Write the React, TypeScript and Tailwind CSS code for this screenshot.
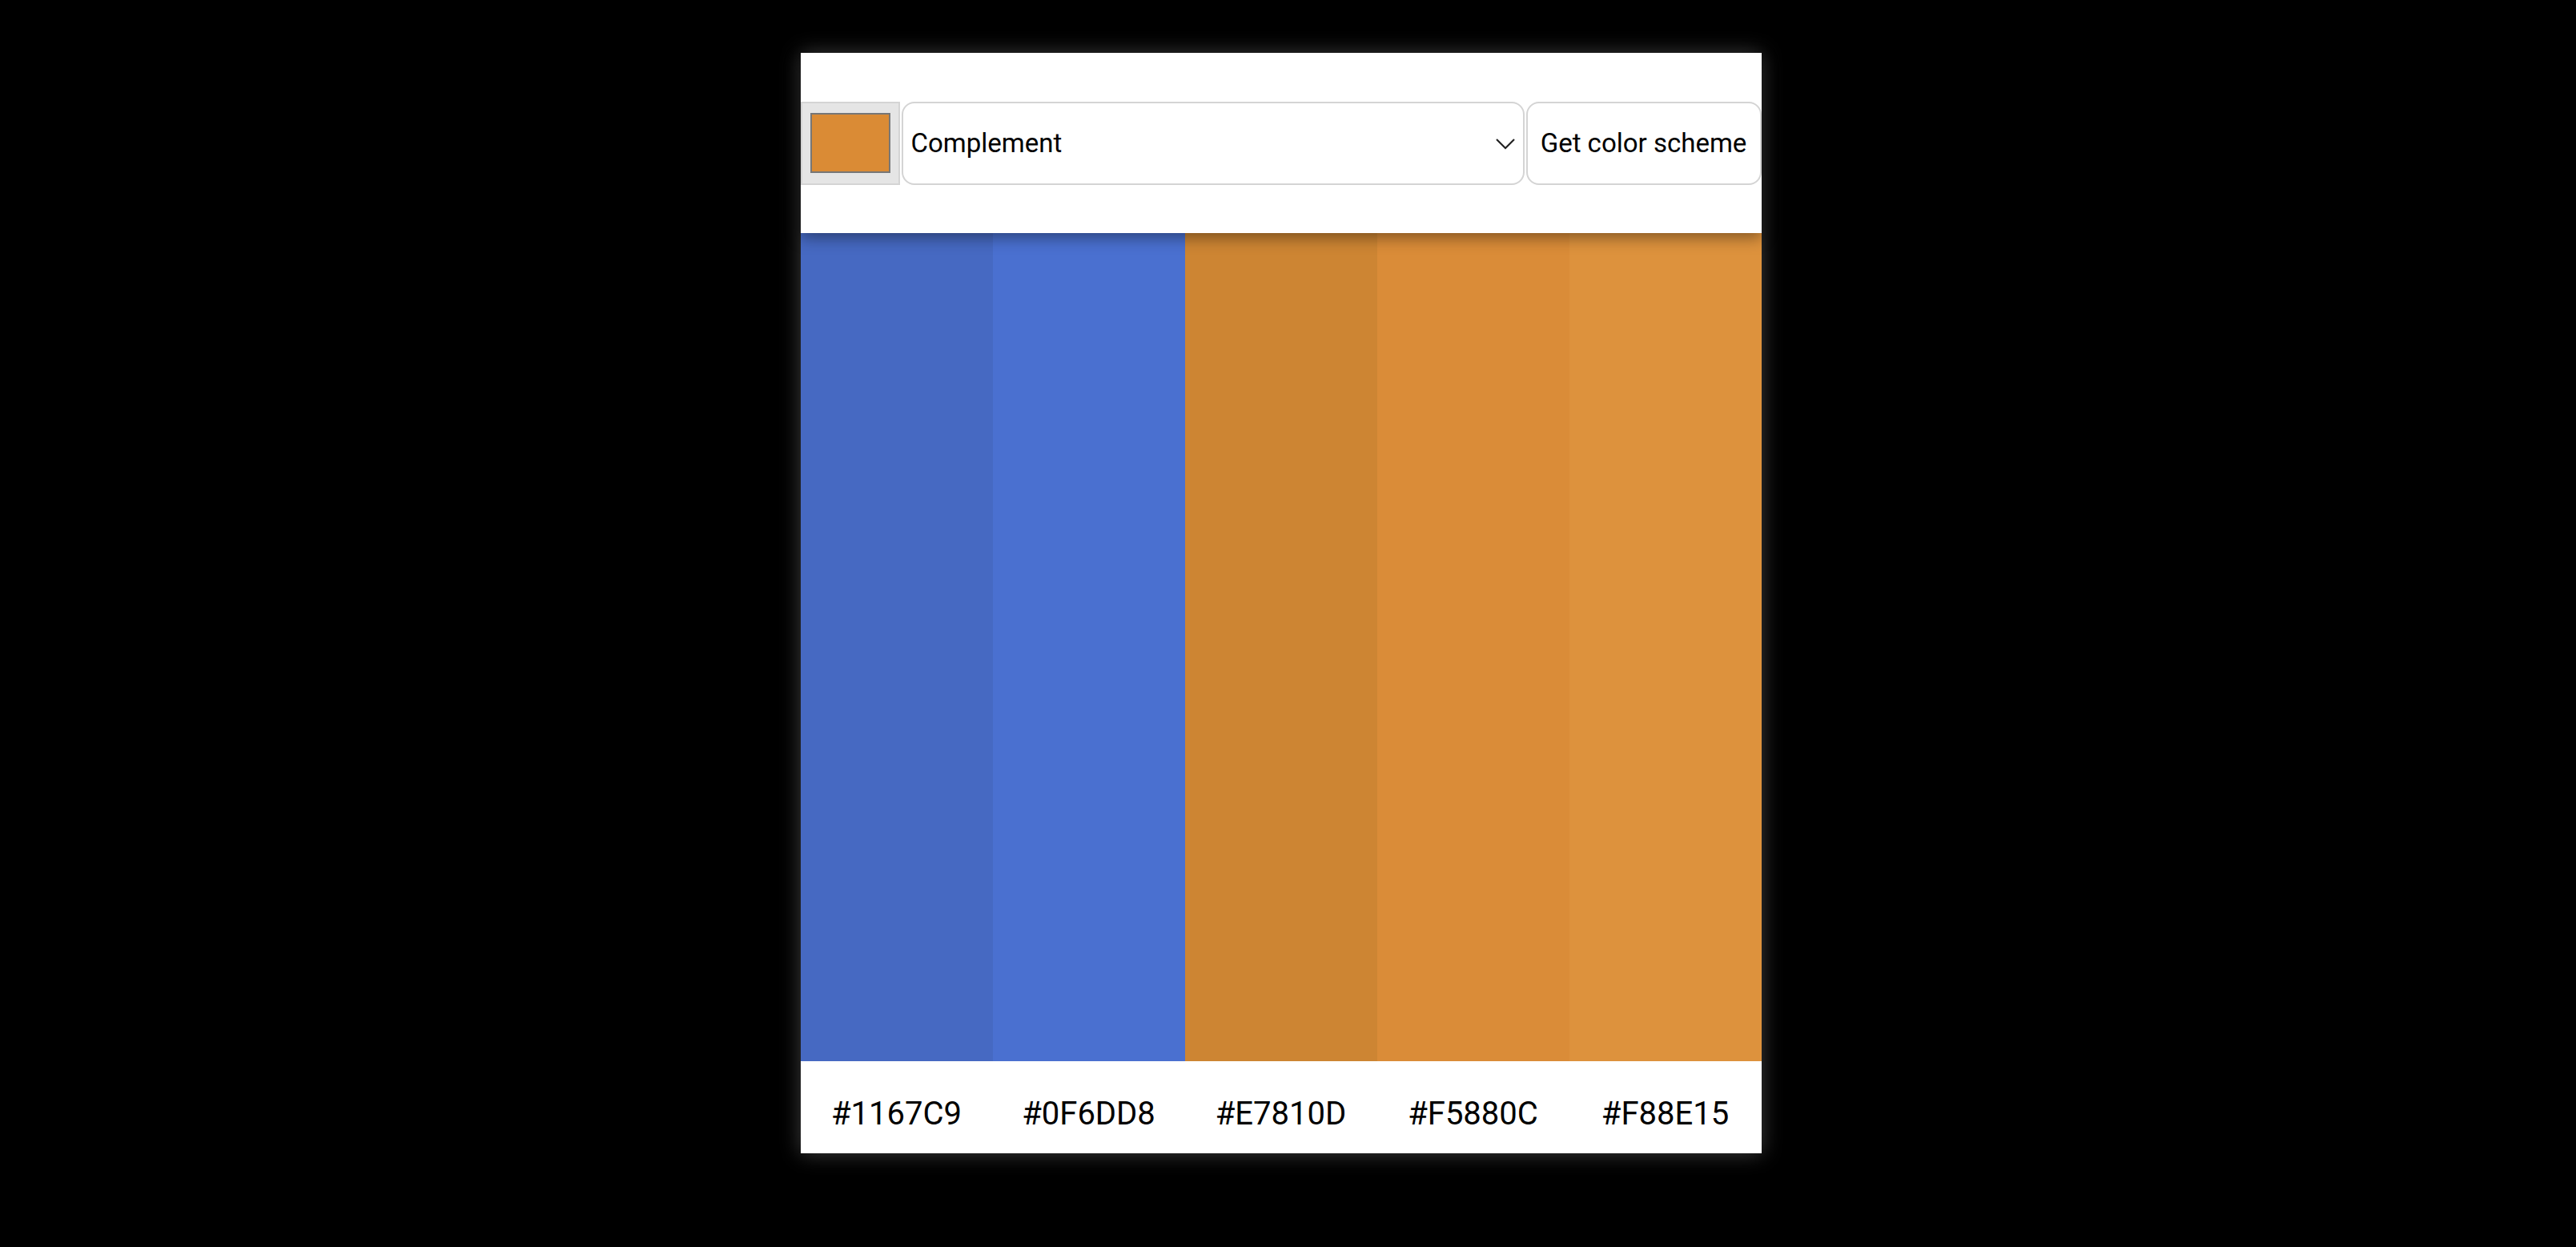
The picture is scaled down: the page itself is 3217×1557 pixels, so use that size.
import React from 'react';

const scheme = [
  { hex: '#1167C9', shown: 'bg-[#4669c2]' },
  { hex: '#0F6DD8', shown: 'bg-[#4a70d0]' },
  { hex: '#E7810D', shown: 'bg-[#cd8533]' },
  { hex: '#F5880C', shown: 'bg-[#da8c38]' },
  { hex: '#F88E15', shown: 'bg-[#dd923d]' },
];

export default function App() {
  return (
    <div className="min-h-screen bg-black flex justify-center pt-[66px] pr-[18px] font-['Roboto',sans-serif]">
      <div className="w-[1200px] h-[1374px] flex flex-col bg-white shadow-[0_0_24px_rgba(255,255,255,0.25)]">
        <header className="relative z-10 h-[225px] shrink-0 flex items-center bg-white shadow-[0_6px_18px_rgba(0,0,0,0.4)]">
          <div className="flex w-full h-[104px] gap-[2px]">
            <div className="w-[124px] shrink-0 flex items-center justify-center bg-[#e5e5e5] border-2 border-[#d4d4d4]">
              <div className="w-[100px] h-[75px] bg-[#da8b35] border-2 border-[#777777]" />
            </div>
            <div className="flex-1 flex items-center justify-between pl-[10px] pr-[9px] border-2 border-[#d4d4d4] rounded-[16px] text-[33px] text-black">
              <span>Complement</span>
              <svg width="26" height="16" viewBox="0 0 26 16" fill="none" stroke="#222" strokeWidth="2.2">
                <path d="M2 3l11 11L24 3" />
              </svg>
            </div>
            <button
              type="button"
              className="w-[294px] shrink-0 flex items-center justify-center border-2 border-[#d4d4d4] rounded-[16px] text-[33px] text-black bg-white"
            >
              Get color scheme
            </button>
          </div>
        </header>
        <div className="flex-1 flex">
          {scheme.map((c) => (
            <div key={c.hex} className={`flex-1 ${c.shown}`} />
          ))}
        </div>
        <div className="h-[115px] shrink-0 flex items-center pt-[16px]">
          {scheme.map((c) => (
            <div key={c.hex} className="flex-1 text-center text-[40px] text-black">
              {c.hex}
            </div>
          ))}
        </div>
      </div>
    </div>
  );
}
